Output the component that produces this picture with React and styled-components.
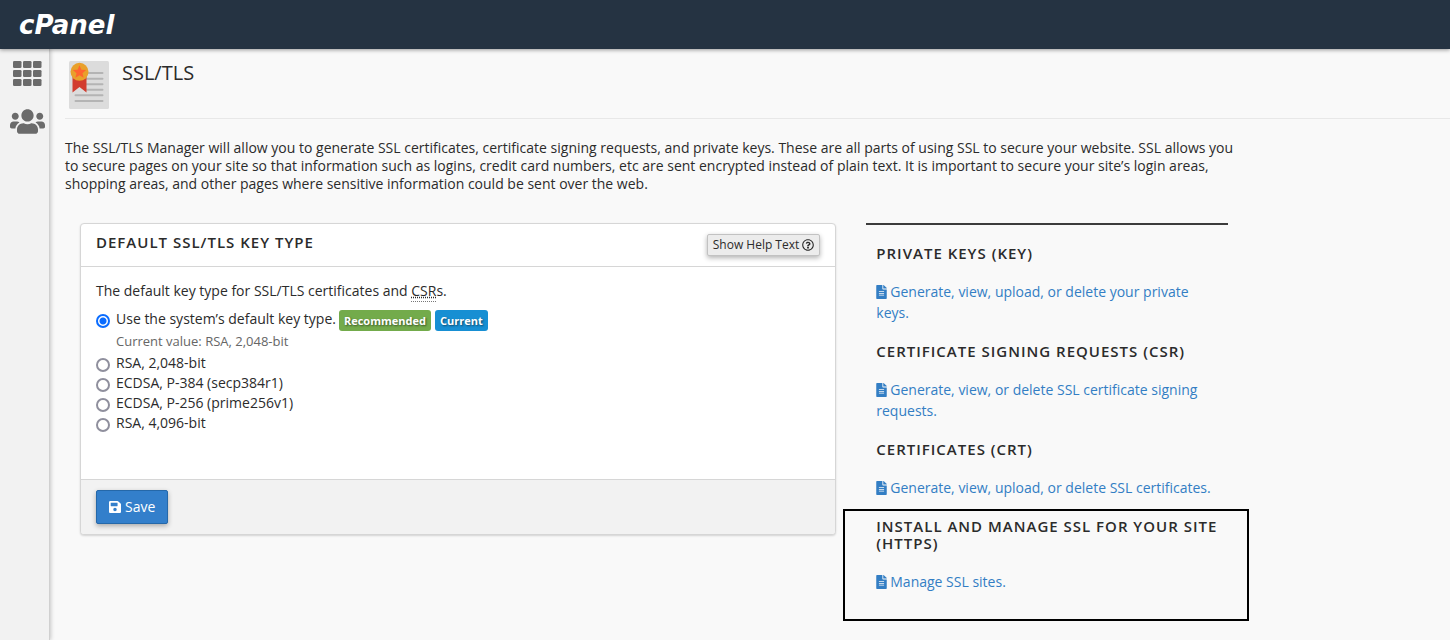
import React, { useState } from "react";
import styled, { createGlobalStyle } from "styled-components";
import { FaUsers, FaFileAlt, FaSave, FaRegQuestionCircle } from "react-icons/fa";

const GlobalStyle = createGlobalStyle`
  * { box-sizing: border-box; }
  body {
    margin: 0;
    background: #f9f9f9;
    color: #2b2b2b;
    font: 14px/18px "Open Sans", "Noto Sans", sans-serif;
  }
`;

const Page = styled.div`
  display: flex;
  flex-direction: column;
  min-height: 100vh;
`;

const TopBar = styled.header`
  position: relative;
  z-index: 1;
  display: flex;
  align-items: center;
  height: 49px;
  padding: 0 19px;
  background: #253342;
  box-shadow: 0 1px 4px rgba(0, 0, 0, 0.4);
`;

const Brand = styled.a`
  color: #fff;
  font: italic 700 26px/48px "DejaVu Sans", sans-serif;
  text-decoration: none;
`;

const Body = styled.div`
  display: flex;
  flex: 1;
`;

const SideNav = styled.nav`
  display: flex;
  flex: none;
  flex-direction: column;
  align-items: center;
  gap: 18px;
  width: 50px;
  padding: 12px 0 0 5px;
  background: #f2f2f2;
  border-right: 1px solid #d0d0d0;
  box-shadow: 1px 0 4px rgba(0, 0, 0, 0.2);
`;

const SideLink = styled.a`
  display: flex;
  color: #6b6b6b;
`;

const Main = styled.main`
  flex: 1;
  min-width: 0;
  padding-left: 15px;
`;

const PageHeader = styled.div`
  display: flex;
  gap: 13px;
  height: 70px;
  padding: 12px 4px 0;
  border-bottom: 1px solid #e8e8e8;
`;

const PageTitle = styled.h1`
  margin: 0;
  font-size: 20px;
  font-weight: 400;
  line-height: 24px;
`;

const Intro = styled.p`
  max-width: 1178px;
  margin: 20px 0 30px;
`;

const Columns = styled.div`
  display: grid;
  grid-template-columns: minmax(0, 23fr) minmax(0, 11fr);
  gap: 30px;
  align-items: start;
  max-width: 1178px;
  padding: 0 15px;
`;

const Panel = styled.form`
  background: #fff;
  border: 1px solid #d6d6d6;
  border-radius: 4px;
  box-shadow: 0 1px 2px rgba(0, 0, 0, 0.15);
  overflow: hidden;
`;

const PanelHeader = styled.div`
  display: flex;
  justify-content: space-between;
  align-items: flex-start;
  padding: 10px 15px;
  height: 43px;
  border-bottom: 1px solid #d6d6d6;
`;

const Heading = styled.h2`
  margin: 0;
  font-size: 15px;
  font-weight: 600;
  line-height: 17px;
  letter-spacing: 1px;
  text-transform: uppercase;
`;

const HelpButton = styled.button`
  display: flex;
  align-items: center;
  gap: 3px;
  height: 22px;
  padding: 0 5px;
  color: #2b2b2b;
  background: #ececec;
  border: 1px solid #c2c2c2;
  border-radius: 2px;
  box-shadow: 0 2px 5px rgba(0, 0, 0, 0.3);
  font: 12px/18px "Open Sans", sans-serif;
  cursor: pointer;
`;

const PanelBody = styled.div`
  padding: 15px 15px 46px;
`;

const Lead = styled.p`
  margin: 0 0 9px;
`;

const Abbr = styled.abbr`
  padding-bottom: 1px;
  border-bottom: 1px dotted #777;
  text-decoration: underline dotted;
`;

const Options = styled.fieldset`
  margin: 0;
  padding: 0;
  border: 0;
`;

const Option = styled.label`
  display: flex;
  align-items: center;
  gap: 6px;
  height: 20px;
`;

const Radio = styled.input`
  appearance: none;
  flex: none;
  width: 14px;
  height: 14px;
  margin: 4px 0 0;
  border: 2px solid #8f8f9d;
  border-radius: 50%;
  background: #fff;

  &:checked {
    border-color: #0a6cff;
    background: radial-gradient(circle, #0a6cff 3px, #fff 4px);
  }
`;

const Badges = styled.span`
  display: flex;
  gap: 4px;
  margin: 3px 0 0 -3px;
`;

const Badge = styled.span`
  padding: 0 5px;
  border-radius: 3px;
  background: ${(p) => p.$color};
  color: #fff;
  font-size: 11px;
  font-weight: 700;
  line-height: 21px;
  text-shadow: 1px 1px 2px rgba(0, 0, 0, 0.5);
`;

const CurrentValue = styled.div`
  margin-bottom: 3px;
  padding: 3px 0 0 20px;
  color: #666;
  font-size: 13px;
`;

const PanelFooter = styled.div`
  padding: 10px 15px;
  background: #f2f2f2;
  border-top: 1px solid #d6d6d6;
`;

const SaveButton = styled.button`
  display: flex;
  align-items: center;
  gap: 4px;
  height: 34px;
  padding: 0 12px;
  color: #fff;
  background: #337fcb;
  border: 1px solid #2568a9;
  border-radius: 2px;
  box-shadow: 0 2px 5px rgba(0, 0, 0, 0.3);
  font: 14px/18px "Open Sans", sans-serif;
  cursor: pointer;

  svg { width: 12px; }
`;

const Aside = styled.aside`
  padding-top: 20px;
  border-top: 2px solid #3c3c3c;
`;

const Section = styled.section`
  padding: 0 10px;
  margin-bottom: 20px;

  ${Heading} { margin-bottom: 19px; }
`;

const HighlightedSection = styled(Section)`
  margin: -9px -21px 0 -23px;
  padding: 7px 29px 27px 31px;
  border: 2px solid #000;
`;

const TaskLink = styled.a`
  display: block;
  color: #337ec4;
  line-height: 21px;
  text-decoration: none;

  svg {
    width: 11px;
    margin-right: 3px;
    vertical-align: -2px;
  }
`;

const AppsIcon = () => (
  <svg width="29" height="25" viewBox="0 0 29 25" fill="currentColor" aria-hidden="true">
    {[0, 9, 18].map((y) =>
      [0, 10, 20].map((x) => <rect key={`${x}-${y}`} x={x} y={y} width="8.500" height="7" rx="1.300" />)
    )}
  </svg>
);

const CertificateIcon = () => (
  <svg width="40" height="48" viewBox="0 0 40 48" aria-hidden="true">
    <rect width="40" height="48" rx="1.500" fill="#dcdcdc" />
    <path
      d="M16 12h17.500M16 17.700h17.500M16 23.300h17.500M16 28.800h17.500M6.500 34.300h27M6.500 40h27"
      stroke="#b4b4b4"
      strokeWidth="2"
      strokeLinecap="round"
    />
    <path d="M3.500 15h14v16.500l-7-5.500-7 5.500z" fill="#d23c2f" />
    <circle cx="10.500" cy="10.800" r="9" fill="#e9a02b" />
    <path
      d="M10.500 4.300l1.900 4.400 4.700.4-3.600 3.100 1.100 4.600-4.100-2.500-4.100 2.500 1.100-4.600-3.600-3.100 4.700-.4z"
      fill="#ff6430"
    />
  </svg>
);

const keyTypes = [
  ["rsa-2048", "RSA, 2,048-bit"],
  ["ecdsa-384", "ECDSA, P-384 (secp384r1)"],
  ["ecdsa-256", "ECDSA, P-256 (prime256v1)"],
  ["rsa-4096", "RSA, 4,096-bit"],
];

const sections = [
  ["Private Keys (KEY)", "Generate, view, upload, or delete your private keys."],
  ["Certificate Signing Requests (CSR)", "Generate, view, or delete SSL certificate signing requests."],
  ["Certificates (CRT)", "Generate, view, upload, or delete SSL certificates."],
];

function Task({ children }) {
  return (
    <TaskLink href="#">
      <FaFileAlt size={14} />
      {children}
    </TaskLink>
  );
}

export default function App() {
  const [keyType, setKeyType] = useState("system");
  const radioProps = (value) => ({
    type: "radio",
    name: "key-type",
    value,
    checked: keyType === value,
    onChange: () => setKeyType(value),
  });

  return (
    <Page>
      <GlobalStyle />
      <TopBar>
        <Brand href="#">cPanel</Brand>
      </TopBar>
      <Body>
        <SideNav>
          <SideLink href="#" aria-label="Tools"><AppsIcon /></SideLink>
          <SideLink href="#" aria-label="User Manager"><FaUsers size={35} /></SideLink>
        </SideNav>
        <Main>
          <PageHeader>
            <CertificateIcon />
            <PageTitle>SSL/TLS</PageTitle>
          </PageHeader>
          <Intro>
            The SSL/TLS Manager will allow you to generate SSL certificates, certificate signing
            requests, and private keys. These are all parts of using SSL to secure your website. SSL
            allows you to secure pages on your site so that information such as logins, credit card
            numbers, etc are sent encrypted instead of plain text. It is important to secure your
            site’s login areas, shopping areas, and other pages where sensitive information could be
            sent over the web.
          </Intro>
          <Columns>
            <Panel onSubmit={(e) => e.preventDefault()}>
              <PanelHeader>
                <Heading>Default SSL/TLS Key Type</Heading>
                <HelpButton type="button">
                  Show Help Text <FaRegQuestionCircle size={12} />
                </HelpButton>
              </PanelHeader>
              <PanelBody>
                <Lead>
                  The default key type for SSL/TLS certificates and{" "}
                  <Abbr title="Certificate Signing Requests">CSR</Abbr>s.
                </Lead>
                <Options aria-label="Default key type">
                  <Option>
                    <Radio {...radioProps("system")} />
                    Use the system’s default key type.
                    <Badges>
                      <Badge $color="#73ab4b">Recommended</Badge>
                      <Badge $color="#178fd3">Current</Badge>
                    </Badges>
                  </Option>
                  <CurrentValue>Current value: RSA, 2,048-bit</CurrentValue>
                  {keyTypes.map(([value, label]) => (
                    <Option key={value}>
                      <Radio {...radioProps(value)} />
                      {label}
                    </Option>
                  ))}
                </Options>
              </PanelBody>
              <PanelFooter>
                <SaveButton type="submit"><FaSave size={14} />Save</SaveButton>
              </PanelFooter>
            </Panel>
            <Aside>
              {sections.map(([title, text]) => (
                <Section key={title}>
                  <Heading>{title}</Heading>
                  <Task>{text}</Task>
                </Section>
              ))}
              <HighlightedSection>
                <Heading>Install and Manage SSL for your site (HTTPS)</Heading>
                <Task>Manage SSL sites.</Task>
              </HighlightedSection>
            </Aside>
          </Columns>
        </Main>
      </Body>
    </Page>
  );
}
